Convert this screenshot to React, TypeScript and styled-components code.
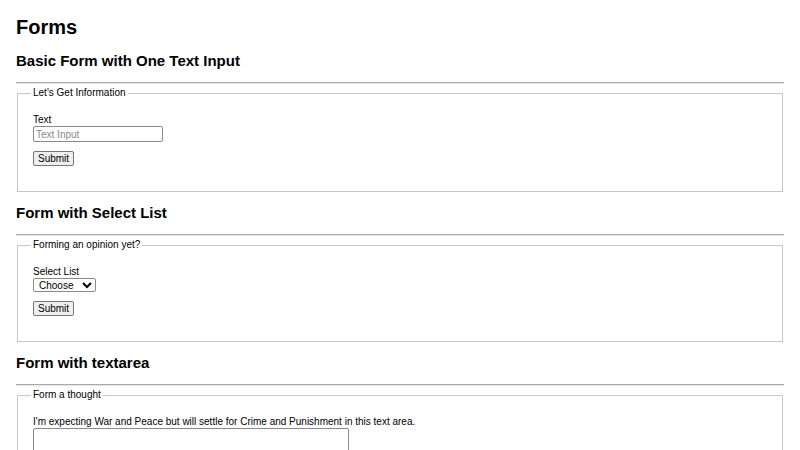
import React from "react";
import styled, { createGlobalStyle } from "styled-components";

const GlobalStyle = createGlobalStyle`
  html, body {
    margin: 0;
    padding: 0;
    background: #ffffff;
  }
  body {
    font-family: "Liberation Sans", Arial, Helvetica, sans-serif;
    font-size: 10px;
    line-height: 12px;
    color: #000000;
  }
`;

const Page = styled.main`
  padding: 15px 16px 0 16px;
  display: flex;
  flex-direction: column;
`;

const Title = styled.h1`
  margin: 0 0 13px 0;
  font-size: 20px;
  line-height: 24px;
  font-weight: bold;
`;

const Section = styled.section`
  display: flex;
  flex-direction: column;
  margin-bottom: 12px;
`;

const SectionTitle = styled.h2`
  margin: 0;
  font-size: 15px;
  line-height: 18px;
  font-weight: bold;
`;

const Rule = styled.hr`
  margin: 12px 0 3px 0;
  height: 0;
  border: none;
  border-top: 1px solid #a9a9a9;
  border-bottom: 1px solid #e6e6e6;
`;

const Fieldset = styled.fieldset`
  margin: 0 1px;
  padding: 0 15px 25px 15px;
  border: 1px solid #c8c8c8;
  min-width: 0;
`;

const Legend = styled.legend`
  margin-left: -2px;
  padding: 0 2px;
  font-size: 10px;
  line-height: 12px;
`;

const Field = styled.div`
  display: flex;
  flex-direction: column;
  align-items: flex-start;
  margin-top: 15px;
`;

const Label = styled.label`
  font-size: 10px;
  line-height: 12px;
`;

const TextInput = styled.input`
  box-sizing: border-box;
  width: 130px;
  height: 16px;
  margin: 0;
  padding: 0 2px;
  border: 1px solid #8a8a8a;
  border-radius: 2px;
  font-family: "Liberation Sans", Arial, sans-serif;
  font-size: 10px;
  &::placeholder {
    color: #8a8a8a;
  }
`;

const Select = styled.select`
  box-sizing: border-box;
  width: 63px;
  height: 14px;
  margin: 0;
  padding: 0 0 0 1px;
  border: 1px solid #8a8a8a;
  border-radius: 2px;
  background: #ffffff;
  font-family: "Liberation Sans", Arial, sans-serif;
  font-size: 10px;
  line-height: 12px;
  color: #000;
`;

const TextArea = styled.textarea`
  box-sizing: border-box;
  width: 316px;
  height: 60px;
  margin: 0;
  border: 1px solid #8a8a8a;
  border-radius: 2px;
  resize: none;
  font-family: "Liberation Mono", monospace;
  font-size: 10px;
`;

const Button = styled.button`
  box-sizing: border-box;
  align-self: flex-start;
  height: 15px;
  margin-top: 9px;
  padding: 0 4px;
  border: 1px solid #767676;
  border-radius: 2px;
  background: #efefef;
  font-family: "Liberation Sans", Arial, sans-serif;
  font-size: 10px;
  line-height: 12px;
  color: #000;
`;

const Form = styled.form`
  display: flex;
  flex-direction: column;
`;

export default function App() {
  return (
    <>
      <GlobalStyle />
      <Page>
        <Title>Forms</Title>

        <Section>
          <SectionTitle>Basic Form with One Text Input</SectionTitle>
          <Rule />
          <Form onSubmit={(e) => e.preventDefault()}>
            <Fieldset>
              <Legend>Let's Get Information</Legend>
              <Field>
                <Label htmlFor="text-input">Text</Label>
                <TextInput id="text-input" type="text" placeholder="Text Input" />
              </Field>
              <Button type="submit">Submit</Button>
            </Fieldset>
          </Form>
        </Section>

        <Section>
          <SectionTitle>Form with Select List</SectionTitle>
          <Rule />
          <Form onSubmit={(e) => e.preventDefault()}>
            <Fieldset>
              <Legend>Forming an opinion yet?</Legend>
              <Field>
                <Label htmlFor="select-list">Select List</Label>
                <Select id="select-list" defaultValue="">
                  <option value="">Choose</option>
                  <option value="yes">Yes</option>
                  <option value="no">No</option>
                </Select>
              </Field>
              <Button type="submit">Submit</Button>
            </Fieldset>
          </Form>
        </Section>

        <Section>
          <SectionTitle>Form with textarea</SectionTitle>
          <Rule />
          <Form onSubmit={(e) => e.preventDefault()}>
            <Fieldset>
              <Legend>Form a thought</Legend>
              <Field>
                <Label htmlFor="thought">
                  I'm expecting War and Peace but will settle for Crime and Punishment in this text area.
                </Label>
                <TextArea id="thought" />
              </Field>
              <Button type="submit">Submit</Button>
            </Fieldset>
          </Form>
        </Section>
      </Page>
    </>
  );
}
